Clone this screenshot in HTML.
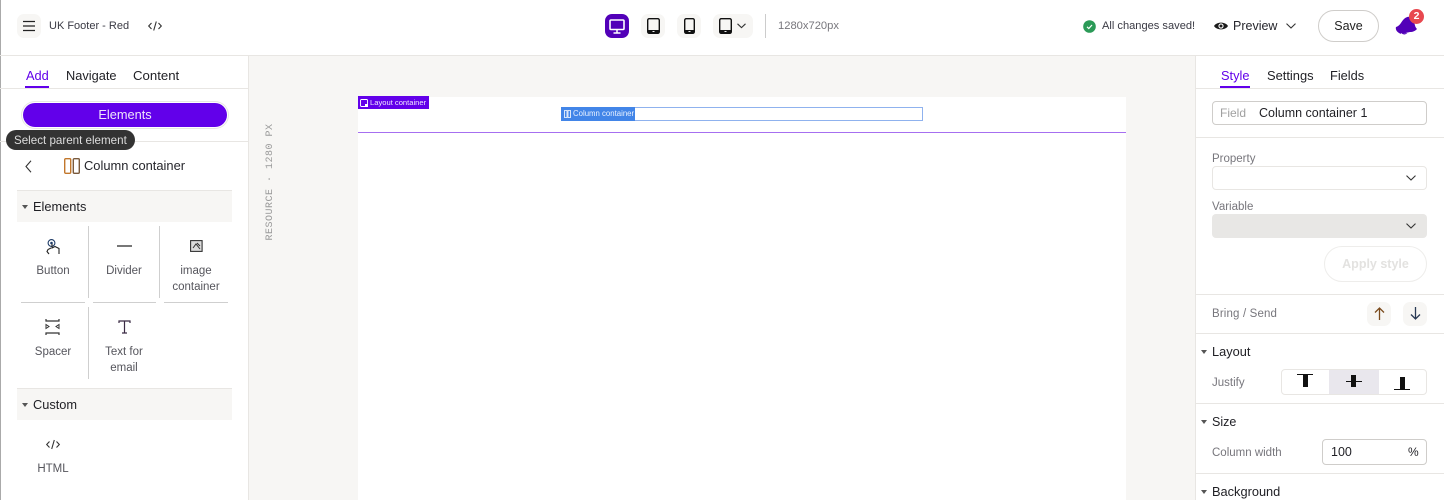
<!DOCTYPE html>
<html><head><meta charset="utf-8"><style>
*{box-sizing:border-box}
html,body{margin:0;padding:0;width:1444px;height:500px;overflow:hidden;background:#fff}
body{position:relative;font-family:"Liberation Sans",sans-serif;color:#1f1f24;font-size:12.8px}
.a{position:absolute}
.t{position:absolute;white-space:nowrap;line-height:16px}
.g{color:#77767c}
.c{text-align:center}
.sq{position:absolute;width:24px;height:24px;border-radius:7px;background:#f7f6f4}
.sec{position:absolute;left:17px;width:215px;height:32px;background:#f7f6f4;border-top:1px solid #e8e6e3}
.tri{position:absolute;width:0;height:0;border-left:3px solid transparent;border-right:3px solid transparent;border-top:4px solid #555}
.hl{position:absolute;height:1px;background:#e8e6e3}
.vl{position:absolute;width:1px;background:#cfcfcf}
svg{position:absolute;overflow:visible}
</style></head><body>
<div class="a" style="left:0;top:0;width:1px;height:500px;background:#aaa"></div>
<div class="a" style="left:249px;top:56px;width:946px;height:444px;background:#f7f6f4"></div>
<div class="hl" style="left:0;top:55px;width:1444px"></div>
<div class="a" style="left:248px;top:56px;width:1px;height:444px;background:#e8e6e3"></div>
<div class="a" style="left:1195px;top:56px;width:1px;height:444px;background:#e8e6e3"></div>

<div class="sq" style="left:17px;top:14px"></div>
<svg style="left:23px;top:20px" width="12" height="12"><path d="M0 1.500H12M0 6H12M0 10.500H12" stroke="#222" stroke-width="1.200" fill="none"/></svg>
<div class="t" style="left:49px;top:18px;font-size:11px;color:#3a3a44">UK Footer - Red</div>
<svg style="left:148px;top:20px" width="14" height="12" viewBox="0 0 14 12"><path d="M3.500 3L.7 6L3.500 9M10.500 3L13.300 6L10.500 9M8.300 1.500L5.700 10.500" stroke="#333" stroke-width="1.100" fill="none"/></svg>

<div class="a" style="left:605px;top:14px;width:24px;height:24px;border-radius:7px;background:#5200b8"></div>
<svg style="left:609px;top:19px" width="16" height="15"><rect x="1" y="1" width="14" height="9.500" rx="1" fill="none" stroke="#fff" stroke-width="1.600"/><path d="M8 11V14M4.500 14H11.500" stroke="#fff" stroke-width="1.500"/></svg>
<div class="sq" style="left:641px;top:14px"></div>
<svg style="left:647px;top:18px" width="13" height="16"><rect x=".7" y=".7" width="11.600" height="14.600" rx="1.500" fill="none" stroke="#111" stroke-width="1.400"/><rect x="1" y="12" width="11" height="3" fill="#111"/><rect x="5.500" y="13" width="2" height="1" fill="#eee"/></svg>
<div class="sq" style="left:677px;top:14px"></div>
<svg style="left:684px;top:18px" width="11" height="16"><rect x=".7" y=".7" width="9.600" height="14.600" rx="1.500" fill="none" stroke="#111" stroke-width="1.400"/><rect x="1" y="12" width="9" height="3" fill="#111"/><rect x="4.500" y="13" width="2" height="1" fill="#eee"/></svg>
<div class="sq" style="left:713px;top:14px;width:40px"></div>
<svg style="left:719px;top:18px" width="13" height="16"><rect x=".7" y=".7" width="11.600" height="14.600" rx="1.500" fill="none" stroke="#111" stroke-width="1.400"/><rect x="1" y="12" width="11" height="3" fill="#111"/><rect x="5.500" y="13" width="2" height="1" fill="#eee"/></svg>
<svg style="left:737px;top:23px" width="9" height="6"><path d="M.5 .8L4.500 4.600L8.500 .8" fill="none" stroke="#333" stroke-width="1.100"/></svg>
<div class="a" style="left:765px;top:14px;width:1px;height:24px;background:#ccc"></div>
<div class="t" style="left:778px;top:18px;font-size:11.200px;color:#77767c">1280x720px</div>

<svg style="left:1083px;top:20px" width="13" height="13"><circle cx="6.500" cy="6.500" r="6.300" fill="#2b9a57"/><path d="M4 6.800L5.800 8.500L9 5" stroke="#fff" stroke-width="1.200" fill="none"/></svg>
<div class="t" style="left:1102px;top:18px;font-size:11.100px;color:#3a3a44">All changes saved!</div>
<svg style="left:1214px;top:21px" width="14" height="10"><path d="M0 5C2.500 .5 11.500 .5 14 5C11.500 9.500 2.500 9.500 0 5Z" fill="#1c1c1c"/><circle cx="7" cy="5" r="2.600" fill="#fff"/><circle cx="7" cy="5" r="1.500" fill="#1c1c1c"/></svg>
<div class="t" style="left:1233px;top:18px;font-size:12.500px;color:#26262c">Preview</div>
<svg style="left:1286px;top:23px" width="10" height="6"><path d="M.5 .6L5 5L9.500 .6" fill="none" stroke="#333" stroke-width="1.100"/></svg>
<div class="a" style="left:1318px;top:10px;width:61px;height:32px;border:1px solid #cfcdca;border-radius:16px"></div>
<div class="t c" style="left:1318px;width:61px;top:18px;font-size:12.500px;color:#222">Save</div>
<svg style="left:1395px;top:14px" width="24" height="22" viewBox="0 0 24 22"><path d="M1 13C5 12 6 8 9 5C12 2 16 2 18 5C20 8 19 12 22 15C20 17 18 18 15 18L6 20C3 19 0 16 1 13Z" fill="#5200b8"/><path d="M6 19.500C8 21.500 11 21.500 13 19" stroke="#fff" stroke-width="1" fill="#5200b8"/></svg>
<div class="a c" style="left:1409px;top:9px;width:15px;height:15px;border-radius:50%;background:#e8484f;color:#fff;font-size:10.500px;line-height:15px;font-weight:bold">2</div>

<div class="t" style="left:26px;top:68px;color:#6200ea">Add</div>
<div class="a" style="left:25px;top:86px;width:24px;height:2px;background:#6200ea"></div>
<div class="t" style="left:66px;top:68px;font-size:12.800px">Navigate</div>
<div class="t" style="left:133px;top:68px;font-size:13.200px">Content</div>
<div class="hl" style="left:0;top:88px;width:248px"></div>
<div class="a" style="left:23px;top:103px;width:204px;height:24px;border-radius:12px;background:#6200ea;box-shadow:0 0 0 1px #fff,0 0 0 2px #e8e6e3"></div>
<div class="t c" style="left:23px;width:204px;top:107px;color:#eee4fb">Elements</div>
<div class="hl" style="left:0;top:141px;width:248px"></div>
<div class="a" style="left:6px;top:130px;width:129px;height:20px;border-radius:10px;background:#333"></div>
<div class="t" style="left:14px;top:133px;font-size:11.600px;color:#ddd">Select parent element</div>
<svg style="left:25px;top:160px" width="7" height="13"><path d="M6 .8L1 6.500L6 12.200" fill="none" stroke="#333" stroke-width="1.100"/></svg>
<svg style="left:64px;top:158px" width="16" height="16"><rect x=".7" y=".7" width="6" height="14.600" rx="1" fill="none" stroke="#c2772c" stroke-width="1.400"/><rect x="9.300" y=".7" width="6" height="14.600" rx="1" fill="none" stroke="#7a5a3c" stroke-width="1.400"/></svg>
<div class="t" style="left:84px;top:158px;font-size:12.900px;color:#26262c">Column container</div>

<div class="sec" style="top:190px"></div><div class="tri" style="left:22px;top:205px"></div>
<div class="t" style="left:33px;top:199px">Elements</div>
<div class="vl" style="left:88px;top:226px;height:72px"></div>
<div class="vl" style="left:159px;top:226px;height:72px"></div>
<div class="vl" style="left:88px;top:307px;height:72px"></div>
<div class="a" style="left:21px;top:302px;width:64px;height:1px;background:#cfcfcf"></div>
<div class="a" style="left:93px;top:302px;width:63px;height:1px;background:#cfcfcf"></div>
<div class="a" style="left:164px;top:302px;width:64px;height:1px;background:#cfcfcf"></div>

<svg style="left:46px;top:239px" width="14" height="15" viewBox="0 0 14 15"><circle cx="5.500" cy="4" r="3.400" fill="none" stroke="#1d3a66" stroke-width="1.100"/><circle cx="5.500" cy="4" r="1.300" fill="#1d3a66"/><path d="M6 5V9L9 7.500L13 9.500V15M5 9L2 10.500L1 12.500L3 15" fill="none" stroke="#222" stroke-width="1.100"/></svg>
<div class="t c" style="left:21px;width:64px;top:263px;color:#55555c;font-size:11.500px">Button</div>
<div class="a" style="left:117px;top:245px;width:15px;height:2px;background:#777"></div>
<div class="t c" style="left:92px;width:64px;top:263px;color:#55555c;font-size:11.500px">Divider</div>
<svg style="left:190px;top:240px" width="13" height="12"><rect x=".6" y=".6" width="11.500" height="10.800" fill="#ddd" stroke="#333" stroke-width="1.100"/><path d="M3 8L6 4L10 9M7 3L10 6" stroke="#333" fill="none"/></svg>
<div class="t c" style="left:164px;width:64px;top:263px;color:#55555c;font-size:11.500px">image</div>
<div class="t c" style="left:164px;width:64px;top:279px;color:#55555c;font-size:11.500px">container</div>
<svg style="left:45px;top:319px" width="15" height="16"><path d="M1 0V2H14V0M1 16V14H14V16" fill="none" stroke="#333" stroke-width="1.200"/><path d="M1 5.500L4 7.500L1 9.500ZM14 5.500L11 7.500L14 9.500Z" fill="none" stroke="#333"/></svg>
<div class="t c" style="left:21px;width:64px;top:344px;color:#55555c;font-size:11.500px">Spacer</div>
<svg style="left:118px;top:320px" width="13" height="14"><path d="M1 3V1H12V3M6.500 1V12.500M4 13H9" fill="none" stroke="#3a2a44" stroke-width="1.200"/></svg>
<div class="t c" style="left:92px;width:64px;top:344px;color:#55555c;font-size:11.500px">Text for</div>
<div class="t c" style="left:92px;width:64px;top:360px;color:#55555c;font-size:11.500px">email</div>

<div class="sec" style="top:388px"></div><div class="tri" style="left:22px;top:403px"></div>
<div class="t" style="left:33px;top:397px">Custom</div>
<svg style="left:46px;top:439px" width="14" height="11" viewBox="0 0 14 11"><path d="M3.500 2.500L.7 5.500L3.500 8.500M10.500 2.500L13.300 5.500L10.500 8.500M8.300 1L5.700 10" stroke="#333" stroke-width="1.100" fill="none"/></svg>
<div class="t c" style="left:21px;width:64px;top:461px;color:#55555c;font-size:11.500px">HTML</div>

<div class="t" style="left:264px;top:175px;width:14px;height:14px;font:10px/14px 'Liberation Mono',monospace;letter-spacing:.5px;color:#9a9a9a;transform:rotate(-90deg);transform-origin:center;display:flex;justify-content:center">RESOURCE · 1280 PX</div>
<div class="a" style="left:358px;top:97px;width:768px;height:403px;background:#fff"></div>
<div class="a" style="left:358px;top:132px;width:768px;height:1px;background:#a66ff0"></div>
<div class="a" style="left:358px;top:96px;width:71px;height:13px;background:#6200ea"></div>
<svg style="left:360px;top:99px" width="8" height="8"><rect x=".5" y=".5" width="7" height="7" rx="1" fill="none" stroke="#fff" stroke-width=".9"/><rect x="5" y="5" width="3" height="3" fill="#fff"/></svg>
<div class="t" style="left:370px;top:96px;font-size:7.600px;line-height:13px;color:#f0e6ff">Layout container</div>
<div class="a" style="left:561px;top:107px;width:362px;height:14px;border:1px solid #8fb2ee;background:#fff"></div>
<div class="a" style="left:561px;top:107px;width:74px;height:14px;background:#4285e8"></div>
<svg style="left:564px;top:110px" width="7" height="8"><path d="M.5 .5H3V7.500H.5ZM4 .5H6.500V7.500H4Z" fill="none" stroke="#fff" stroke-width=".8"/></svg>
<div class="t" style="left:573px;top:107px;font-size:7.800px;line-height:14px;color:#eaf2ff">Column container</div>

<div class="t" style="left:1221px;top:68px;color:#6200ea">Style</div>
<div class="a" style="left:1220px;top:86px;width:30px;height:2px;background:#6200ea"></div>
<div class="t" style="left:1267px;top:68px;font-size:12.900px">Settings</div>
<div class="t" style="left:1330px;top:68px">Fields</div>
<div class="hl" style="left:1196px;top:88px;width:248px"></div>
<div class="a" style="left:1212px;top:101px;width:215px;height:24px;border:1px solid #cfcdca;border-radius:4px"></div>
<div class="t" style="left:1220px;top:105px;color:#a0a0a0;font-size:12px">Field</div>
<div class="t" style="left:1259px;top:105px;font-size:12.500px">Column container 1</div>
<div class="hl" style="left:1196px;top:137px;width:248px"></div>
<div class="t g" style="left:1212px;top:151px;font-size:11.500px">Property</div>
<div class="a" style="left:1212px;top:166px;width:215px;height:24px;border:1px solid #e8e6e3;border-radius:4px"></div>
<svg style="left:1406px;top:175px" width="10" height="6"><path d="M.5 .6L5 5L9.500 .6" fill="none" stroke="#333" stroke-width="1.100"/></svg>
<div class="t g" style="left:1212px;top:199px;font-size:11.500px">Variable</div>
<div class="a" style="left:1212px;top:214px;width:215px;height:24px;background:#e8e7e5;border-radius:4px"></div>
<svg style="left:1406px;top:223px" width="10" height="6"><path d="M.5 .6L5 5L9.500 .6" fill="none" stroke="#333" stroke-width="1.100"/></svg>
<div class="a" style="left:1324px;top:246px;width:103px;height:36px;border:1px solid #eeedeb;border-radius:18px"></div>
<div class="t c" style="left:1324px;width:103px;top:256px;color:#e3e2e0;font-weight:bold;font-size:12.500px">Apply style</div>
<div class="hl" style="left:1196px;top:294px;width:248px"></div>
<div class="t g" style="left:1212px;top:306px;font-size:11.500px;letter-spacing:.15px">Bring / Send</div>
<div class="sq" style="left:1367px;top:302px"></div>
<svg style="left:1374px;top:307px" width="11" height="13"><path d="M5.500 13V1M1 5.500L5.500 1L10 5.500" fill="none" stroke="#7a4a1c" stroke-width="1.300"/></svg>
<div class="sq" style="left:1403px;top:302px"></div>
<svg style="left:1410px;top:307px" width="11" height="13"><path d="M5.500 0V12M1 7.500L5.500 12L10 7.500" fill="none" stroke="#2a3a55" stroke-width="1.300"/></svg>
<div class="hl" style="left:1196px;top:333px;width:248px"></div>
<div class="tri" style="left:1201px;top:350px"></div>
<div class="t" style="left:1212px;top:344px">Layout</div>
<div class="t g" style="left:1212px;top:375px;font-size:11.500px">Justify</div>
<div class="a" style="left:1281px;top:369px;width:146px;height:26px;border:1px solid #e8e6e3;border-radius:4px"></div>
<div class="a" style="left:1329px;top:370px;width:50px;height:24px;background:#e9e7ed"></div>
<div class="a" style="left:1297px;top:374px;width:16px;height:1px;background:#111"></div>
<div class="a" style="left:1303px;top:375px;width:5px;height:12px;background:#111"></div>
<div class="a" style="left:1346px;top:381px;width:16px;height:1px;background:#111"></div>
<div class="a" style="left:1351px;top:375px;width:5px;height:12px;background:#111"></div>
<div class="a" style="left:1394px;top:389px;width:16px;height:1px;background:#111"></div>
<div class="a" style="left:1400px;top:377px;width:5px;height:12px;background:#111"></div>
<div class="hl" style="left:1196px;top:403px;width:248px"></div>
<div class="tri" style="left:1201px;top:420px"></div>
<div class="t" style="left:1212px;top:414px;font-size:12.500px">Size</div>
<div class="t g" style="left:1212px;top:445px;font-size:11.500px">Column width</div>
<div class="a" style="left:1322px;top:439px;width:105px;height:26px;border:1px solid #cfcdca;border-radius:4px"></div>
<div class="t" style="left:1331px;top:444px;font-size:12.500px">100</div>
<div class="t" style="left:1408px;top:444px;font-size:12px">%</div>
<div class="hl" style="left:1196px;top:473px;width:248px"></div>
<div class="tri" style="left:1201px;top:490px"></div>
<div class="t" style="left:1212px;top:484px">Background</div>
</body></html>
